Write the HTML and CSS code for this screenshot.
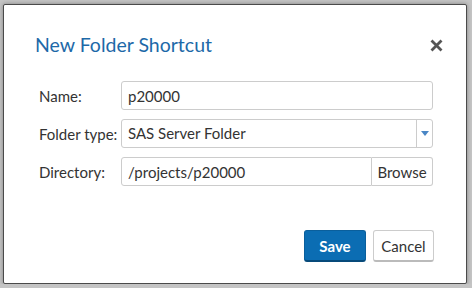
FILE: index.html
```html
<!DOCTYPE html>
<html lang="en">

<head>
    <meta charset="UTF-8">
    <meta name="viewport" content="width=device-width, initial-scale=1.0">
    <title>New Folder Shortcut</title>
    <link rel="stylesheet" href="styles.css">
</head>

<body>

    <div class="dialog">
        <div class="dialog-header">
            <h1 class="dialog-title">New Folder Shortcut</h1>
            <button type="button" class="close-btn" aria-label="Close">
                <svg width="13" height="13" viewBox="0 0 13 13">
                    <path d="M1.5 1.5 L11.5 11.5 M11.5 1.5 L1.5 11.5" stroke="#555" stroke-width="2.8" stroke-linecap="butt" fill="none" />
                </svg>
            </button>
        </div>

        <form class="shortcut-form">
            <label for="nombre">Name:</label>
            <input type="text" id="nombre" class="field" value="p20000">

            <label for="tipo">Folder type:</label>
            <div class="select-box">
                <span class="select-value">SAS Server Folder</span>
                <span class="select-arrow">
                    <svg width="8" height="5" viewBox="0 0 8 5">
                        <path d="M0 0 L8 0 L4 5 Z" fill="#4a86c5" />
                    </svg>
                </span>
            </div>

            <label for="directorio">Directory:</label>
            <div class="browse-group">
                <input type="text" id="directorio" class="field" value="/projects/p20000">
                <button type="button" class="browse-btn">Browse</button>
            </div>
        </form>

        <div class="dialog-footer">
            <button type="button" class="btn btn-primary">Save</button>
            <button type="button" class="btn btn-default">Cancel</button>
        </div>
    </div>

</body>

</html>
```

FILE: styles.css
```css
* {
    box-sizing: border-box;
}

body {
    font-family: Lato, "Open Sans", Arial, sans-serif;
    margin: 0;
    padding: 0;
    background-color: #c4c4c4;
    color: #333;
}

.dialog {
    width: 464px;
    height: 280px;
    margin: 4px 0 0 3px;
    background-color: #fff;
    border: 1px solid #4a4a4a;
    border-radius: 2px;
    box-shadow: 0 0 4px rgba(0, 0, 0, 0.35);
    display: flex;
    flex-direction: column;
}

.dialog-header {
    display: flex;
    justify-content: space-between;
    align-items: center;
    padding: 28px 23px 0 31px;
}

.dialog-title {
    margin: 0;
    font-size: 19.5px;
    font-weight: normal;
    color: #1d69a8;
    line-height: 24px;
}

.close-btn {
    border: none;
    background: none;
    padding: 0;
    width: 14px;
    height: 14px;
    display: flex;
    align-items: center;
    justify-content: center;
    cursor: pointer;
}

.shortcut-form {
    display: grid;
    grid-template-columns: 82px 312px;
    row-gap: 9px;
    align-items: center;
    padding: 24px 0 0 35px;
}

label {
    font-size: 15px;
    color: #333;
}

.field {
    height: 29px;
    padding: 0 6px;
    border: 1px solid #ccc;
    border-radius: 3px;
    font-family: inherit;
    font-size: 15px;
    color: #333;
    width: 100%;
}

.select-box {
    display: flex;
    height: 29px;
    border: 1px solid #ccc;
    border-radius: 3px;
}

.select-value {
    flex: 1;
    padding: 0 6px;
    font-size: 15px;
    line-height: 27px;
}

.select-arrow {
    width: 16px;
    border-left: 1px solid #ccc;
    display: flex;
    align-items: center;
    justify-content: center;
}

.browse-group {
    display: flex;
    height: 29px;
}

.browse-group .field {
    flex: 1;
    border-radius: 3px 0 0 3px;
}

.browse-btn {
    width: 61px;
    height: 29px;
    border: 1px solid #ccc;
    border-left: none;
    border-radius: 0 3px 3px 0;
    background-color: #fff;
    font-family: inherit;
    font-size: 15px;
    color: #333;
    padding: 0;
}

.dialog-footer {
    margin-top: auto;
    display: flex;
    justify-content: flex-end;
    gap: 7px;
    padding: 0 32px 21px 0;
}

.btn {
    height: 32px;
    border-radius: 3px;
    font-family: inherit;
    font-size: 15px;
    cursor: pointer;
    padding: 0;
}

.btn-primary {
    width: 62px;
    background-color: #0b6db3;
    border: 1px solid #0a5f9c;
    border-bottom: 2px solid #074a7a;
    color: #fff;
    font-weight: bold;
}

.btn-default {
    width: 61px;
    background-color: #fff;
    border: 1px solid #ccc;
    border-bottom: 2px solid #bbb;
    color: #333;
}
```
